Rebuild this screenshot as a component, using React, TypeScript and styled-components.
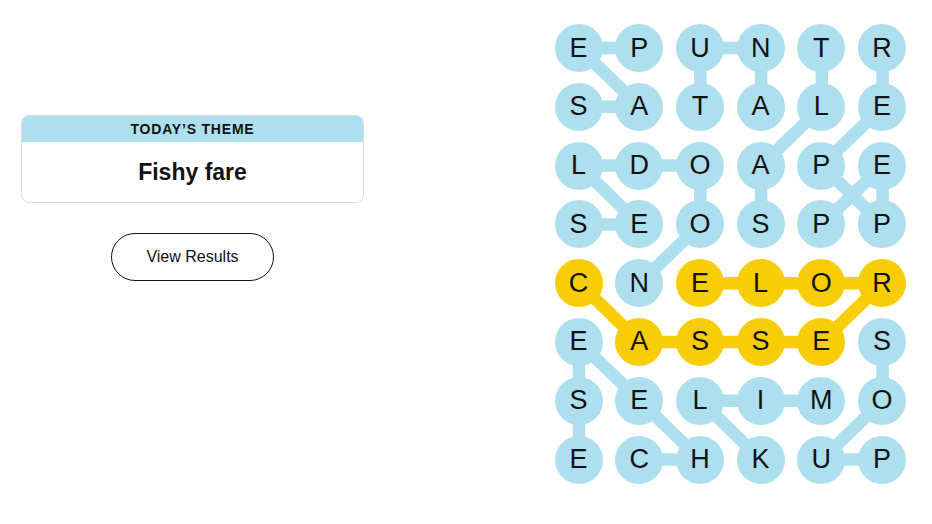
import styled, { createGlobalStyle } from "styled-components";

const GlobalStyle = createGlobalStyle`
  body {
    margin: 0;
    background: #fff;
    color: #121212;
    font-family: "Liberation Sans", Arial, sans-serif;
  }
`;

const BLUE = "#aedfee";
const GOLD = "#f8cd05";

const COL_PITCH = 60.7;
const ROW_PITCH = 58.8;
const DOT = 48;

const Page = styled.main`
  display: flex;
  justify-content: space-between;
  width: 932px;
  height: 524px;
  padding: 24px 26px 0 21px;
  box-sizing: border-box;
`;

const Sidebar = styled.section`
  width: 343px;
  padding-top: 91px;
  display: flex;
  flex-direction: column;
  align-items: center;
  gap: 30px;
`;

const ThemeCard = styled.div`
  width: 100%;
  border: 1px solid #dcdcdc;
  border-radius: 8px;
  overflow: hidden;
  box-sizing: border-box;
`;

const ThemeLabel = styled.div`
  height: 26px;
  background: ${BLUE};
  display: flex;
  align-items: center;
  justify-content: center;
  font-size: 14px;
  font-weight: 700;
  letter-spacing: 0.8px;
  text-transform: uppercase;
`;

const ThemeName = styled.h1`
  margin: 0;
  height: 60px;
  display: flex;
  align-items: center;
  justify-content: center;
  font-size: 23px;
  font-weight: 700;
`;

const ResultsButton = styled.button`
  width: 163px;
  height: 48px;
  border: 1px solid #121212;
  border-radius: 24px;
  background: #fff;
  color: #121212;
  font-family: inherit;
  font-size: 16px;
  cursor: pointer;
`;

const Board = styled.div`
  position: relative;
  display: grid;
  grid-template-columns: repeat(6, ${DOT}px);
  grid-auto-rows: ${DOT}px;
  column-gap: ${COL_PITCH - DOT}px;
  row-gap: ${ROW_PITCH - DOT}px;
  align-self: flex-start;
`;

const Links = styled.svg`
  position: absolute;
  inset: 0;
  width: 100%;
  height: 100%;
  z-index: 0;
`;

const Letter = styled.button<{ $found: "word" | "spangram" }>`
  position: relative;
  z-index: 1;
  width: ${DOT}px;
  height: ${DOT}px;
  padding: 0;
  border: none;
  border-radius: 50%;
  background: ${(p) => (p.$found === "spangram" ? GOLD : BLUE)};
  color: #121212;
  font-family: "Liberation Sans Narrow", "Liberation Sans", Arial, sans-serif;
  font-size: 27px;
  display: flex;
  align-items: center;
  justify-content: center;
`;

const rows = [
  "EPUNTR",
  "SATALE",
  "LDOAPE",
  "SEOSPP",
  "CNELOR",
  "EASSES",
  "SELIMO",
  "ECHKUP",
];

type Cell = [number, number];

// each found word as a path of [row, col] cells, in reading order
const words: { path: Cell[]; spangram?: boolean }[] = [
  { path: [[1, 0], [1, 1], [0, 0], [0, 1]] },
  { path: [[1, 2], [0, 2], [0, 3], [1, 3]] },
  { path: [[3, 3], [2, 3], [1, 4], [0, 4]] },
  { path: [[3, 4], [2, 5], [3, 5], [2, 4], [1, 5], [0, 5]] },
  { path: [[4, 1], [3, 2], [2, 2], [2, 1], [2, 0], [3, 1], [3, 0]] },
  {
    path: [[4, 0], [5, 1], [5, 2], [5, 3], [5, 4], [4, 5], [4, 4], [4, 3], [4, 2]],
    spangram: true,
  },
  { path: [[7, 1], [7, 2], [6, 1], [5, 0], [6, 0], [7, 0]] },
  { path: [[6, 4], [6, 3], [6, 2], [7, 3]] },
  { path: [[5, 5], [6, 5], [7, 4], [7, 5]] },
];

const spangramCells = new Set(
  words.filter((w) => w.spangram).flatMap((w) => w.path.map(([r, c]) => `${r}-${c}`))
);

const cx = (c: number) => DOT / 2 + c * COL_PITCH;
const cy = (r: number) => DOT / 2 + r * ROW_PITCH;

function App() {
  return (
    <>
      <GlobalStyle />
      <Page>
        <Sidebar>
          <ThemeCard>
            <ThemeLabel>Today’s Theme</ThemeLabel>
            <ThemeName>Fishy fare</ThemeName>
          </ThemeCard>
          <ResultsButton>View Results</ResultsButton>
        </Sidebar>
        <Board>
          <Links>
            {words.map((w, i) => (
              <polyline
                key={i}
                points={w.path.map(([r, c]) => `${cx(c)},${cy(r)}`).join(" ")}
                fill="none"
                stroke={w.spangram ? GOLD : BLUE}
                strokeWidth={12.5}
                strokeLinejoin="round"
              />
            ))}
          </Links>
          {rows.map((row, r) =>
            row.split("").map((ch, c) => (
              <Letter
                key={`${r}-${c}`}
                $found={spangramCells.has(`${r}-${c}`) ? "spangram" : "word"}
              >
                {ch}
              </Letter>
            ))
          )}
        </Board>
      </Page>
    </>
  );
}

export default App;
